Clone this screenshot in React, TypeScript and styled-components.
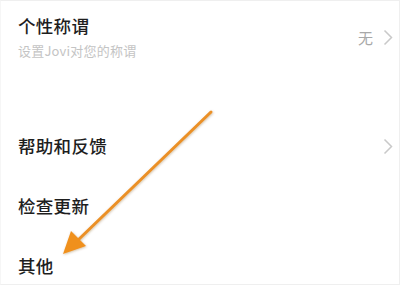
import React from 'react';
import styled, { createGlobalStyle } from 'styled-components';

const GlobalStyle = createGlobalStyle`
  html, body {
    margin: 0;
    padding: 0;
    background: #fff;
  }
  body {
    font-family: "Noto Sans CJK SC", "Noto Sans", sans-serif;
  }
`;

const Screen = styled.div`
  position: relative;
  width: 398px;
  height: 283px;
  border: 1px solid #efefef;
  border-left-color: #f6f6f6;
  overflow: hidden;
  background: #fff;
`;

const Row = styled.div<{ $height: number }>`
  display: flex;
  align-items: center;
  justify-content: space-between;
  height: ${p => p.$height}px;
  padding: 0 6px 0 17px;
`;

const Spacer = styled.div`
  height: 43px;
`;

const TextBlock = styled.div`
  display: flex;
  flex-direction: column;
  gap: 4px;
`;

const Title = styled.div`
  font-size: 17.5px;
  font-weight: 500;
  line-height: 24px;
  color: #1e1e1e;
  letter-spacing: 0.3px;
`;

const Subtitle = styled.div`
  font-size: 13px;
  line-height: 18px;
  color: #c4c4c4;
  letter-spacing: 0.2px;
`;

const Trailing = styled.div`
  display: flex;
  align-items: center;
  gap: 10px;
`;

const Value = styled.span`
  font-size: 15px;
  color: #a8a8a8;
`;

const Overlay = styled.svg`
  position: absolute;
  left: 0;
  top: 0;
  pointer-events: none;
`;

const Chevron = () => (
  <svg width="10" height="17" viewBox="0 0 10 17">
    <path d="M1.5 1.5 L8.5 8.5 L1.5 15.5" fill="none" stroke="#c9c9c9" strokeWidth="1.5" />
  </svg>
);

const App: React.FC = () => (
  <>
    <GlobalStyle />
    <Screen>
      <Row $height={72}>
        <TextBlock>
          <Title>个性称谓</Title>
          <Subtitle>设置Jovi对您的称谓</Subtitle>
        </TextBlock>
        <Trailing>
          <Value>无</Value>
          <Chevron />
        </Trailing>
      </Row>
      <Spacer />
      <Row $height={60}>
        <Title>帮助和反馈</Title>
        <Chevron />
      </Row>
      <Row $height={60}>
        <Title>检查更新</Title>
      </Row>
      <Row $height={60}>
        <Title>其他</Title>
      </Row>

      <Overlay width="400" height="285" viewBox="0 0 400 285">
        <defs>
          <filter id="sh" x="-20%" y="-20%" width="140%" height="140%">
            <feDropShadow dx="0.6" dy="0.8" stdDeviation="0.8" floodColor="#7a4a10" floodOpacity="0.35" />
          </filter>
        </defs>
        <g filter="url(#sh)">
          <line x1="210" y1="111" x2="76" y2="240" stroke="#eb9028" strokeWidth="3" strokeLinecap="round" />
          <polygon points="62,253 70,230 85,245" fill="#f0901e" />
        </g>
      </Overlay>
    </Screen>
  </>
);

export default App;
